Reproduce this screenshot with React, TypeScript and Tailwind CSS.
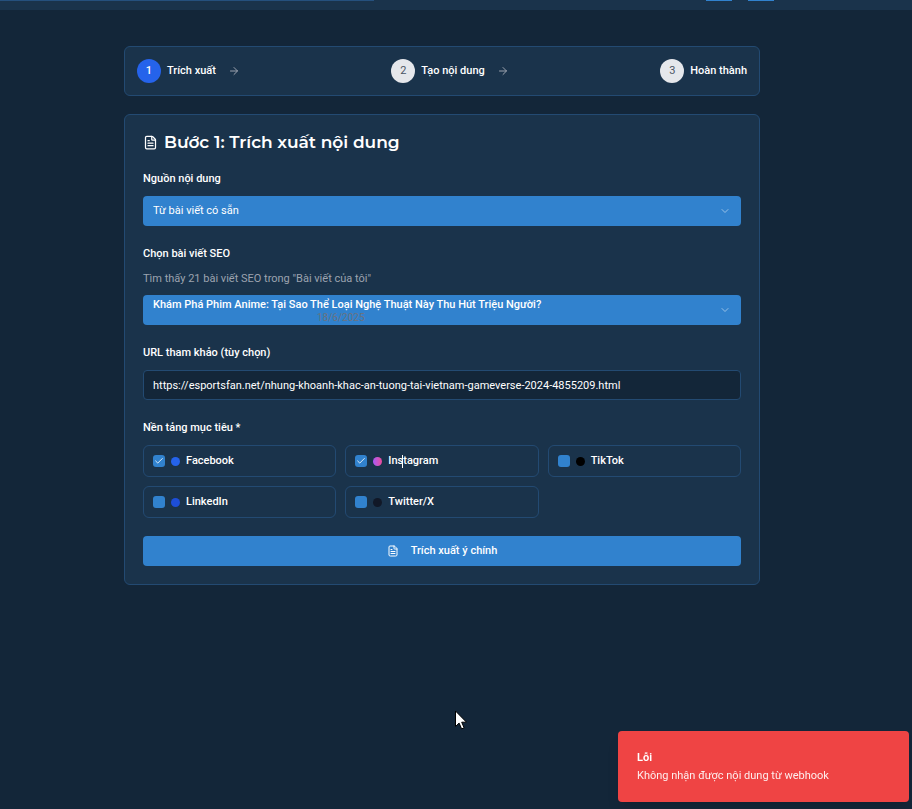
import { ArrowRight, Check, ChevronDown, FileText } from "lucide-react";

const steps = ["Trích xuất", "Tạo nội dung", "Hoàn thành"];

const platforms = [
  { id: "facebook", name: "Facebook", dot: "bg-[#2563eb]", checked: true },
  { id: "instagram", name: "Instagram", dot: "bg-linear-to-r from-[#a855f7] to-[#ec4899]", checked: true, caret: true },
  { id: "tiktok", name: "TikTok", dot: "bg-black", checked: false },
  { id: "linkedin", name: "LinkedIn", dot: "bg-[#1d4ed8]", checked: false },
  { id: "twitter", name: "Twitter/X", dot: "bg-[#111827]", checked: false },
];

function Header() {
  return (
    <header className="flex h-[10px] items-start bg-[#1a334b]">
      <div className="h-px w-[374px] bg-[#25507d]" />
      <div className="mr-[138px] ml-auto flex gap-4">
        <div className="h-px w-[26px] bg-[#3182ce]" />
        <div className="h-px w-[26px] bg-[#3182ce]" />
      </div>
    </header>
  );
}

function Stepper() {
  return (
    <ol className="flex items-center justify-between rounded-md border border-[#234a72] bg-[#1a334b] p-3">
      {steps.map((step, i) => (
        <li key={step} className="flex items-center">
          <span
            className={
              i === 0
                ? "flex size-6 items-center justify-center rounded-full bg-[#2563eb] font-medium text-white"
                : "flex size-6 items-center justify-center rounded-full bg-[#e5e7eb] text-[#4b5563]"
            }
          >
            {i + 1}
          </span>
          <span className="ml-1.5 font-medium">{step}</span>
          {i < steps.length - 1 && <ArrowRight className="ml-3 size-3 text-[#9ca3af]" strokeWidth={2} />}
        </li>
      ))}
    </ol>
  );
}

function Field({ id, label, hint, children }: { id: string; label: string; hint?: string; children: React.ReactNode }) {
  return (
    <div className="flex flex-col gap-[7px]">
      <label htmlFor={id} className="leading-5 font-medium">
        {label}
      </label>
      {hint && <p className="pb-0.5 leading-[15px] text-[#9ca3af]">{hint}</p>}
      {children}
    </div>
  );
}

function Chevron() {
  return <ChevronDown className="pointer-events-none absolute top-[9px] right-[10px] size-3 text-white opacity-50" />;
}

export default function App() {
  return (
    <div className="min-h-screen bg-[#132639] font-['Roboto',sans-serif] text-[11px] leading-[18px] text-white">
      <Header />
      <main className="pt-9 pr-7">
        <div className="mx-auto flex max-w-[636px] flex-col gap-[18px]">
          <Stepper />
          <form className="flex flex-col gap-[18px] rounded-md border border-[#234a72] bg-[#1a334b] p-[18px]">
            <h1 className="flex items-center gap-1.5 font-['Montserrat','Inter',sans-serif] text-[17px] leading-[18px] font-semibold">
              <FileText className="size-[15px]" />
              Bước 1: Trích xuất nội dung
            </h1>

            <Field id="source" label="Nguồn nội dung">
              <div className="relative">
                <select id="source" className="block h-[30px] w-full appearance-none rounded bg-[#3182ce] px-[10px]">
                  <option>Từ bài viết có sẵn</option>
                </select>
                <Chevron />
              </div>
            </Field>

            <Field id="article" label="Chọn bài viết SEO" hint={'Tìm thấy 21 bài viết SEO trong "Bài viết của tôi"'}>
              <div className="relative">
                <select
                  id="article"
                  className="block h-[30px] w-full appearance-none rounded bg-[#3182ce] px-[10px] pb-[10px] font-medium"
                >
                  <option>Khám Phá Phim Anime: Tại Sao Thể Loại Nghệ Thuật Này Thu Hút Triệu Người?</option>
                </select>
                <span className="pointer-events-none absolute top-4 left-[174px] text-[10px] leading-[14px] text-[#6b7280]">
                  18/6/2025
                </span>
                <Chevron />
              </div>
            </Field>

            <Field id="url" label="URL tham khảo (tùy chọn)">
              <input
                id="url"
                type="text"
                defaultValue="https://esportsfan.net/nhung-khoanh-khac-an-tuong-tai-vietnam-gameverse-2024-4855209.html"
                className="block h-[30px] w-full rounded border border-[#234a72] bg-[#132639] px-[9px]"
              />
            </Field>

            <fieldset>
              <legend className="mb-[7px] leading-5 font-medium">Nền tảng mục tiêu *</legend>
              <div className="grid grid-cols-3 gap-[9px]">
                {platforms.map((p) => (
                  <label
                    key={p.id}
                    htmlFor={p.id}
                    className="flex h-8 items-center gap-1.5 rounded-md border border-[#234a72] px-[9px] font-medium"
                  >
                    <span className="relative size-3">
                      <input
                        id={p.id}
                        type="checkbox"
                        defaultChecked={p.checked}
                        className="peer block size-3 appearance-none rounded-[3px] bg-[#3182ce]"
                      />
                      <Check className="pointer-events-none absolute inset-0 hidden size-3 p-px text-white peer-checked:block" />
                    </span>
                    <span className={`size-[9px] rounded-full ${p.dot}`} />
                    <span className="relative">
                      {p.name}
                      {p.caret && <span className="absolute top-[3px] left-[14px] h-[13px] w-px bg-white" />}
                    </span>
                  </label>
                ))}
              </div>
            </fieldset>

            <button
              type="button"
              className="flex h-[30px] items-center justify-center gap-3 rounded bg-[#3182ce] font-medium"
            >
              <FileText className="size-3" />
              Trích xuất ý chính
            </button>
          </form>
        </div>
      </main>

      <div role="alert" className="fixed right-[3px] bottom-[7px] w-[291px] rounded bg-[#ef4444] px-[19px] pt-[18px] pb-[17px] shadow-lg">
        <p className="font-semibold">Lỗi</p>
        <p className="opacity-90">Không nhận được nội dung từ webhook</p>
      </div>

      <svg className="fixed top-[710px] left-[455px] h-5 w-3" viewBox="0 0 12 20" aria-hidden="true">
        <path d="M.5 1v15.5l3.6-3.4 2.5 5.8 2.5-1.1-2.4-5.6h4.8z" fill="#fff" stroke="#000" />
      </svg>
    </div>
  );
}
